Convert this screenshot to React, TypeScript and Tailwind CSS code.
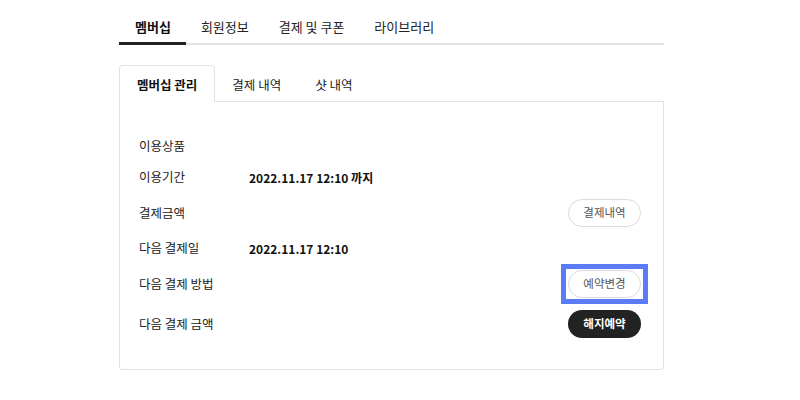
import React from "react";

const font = { fontFamily: '"Noto Sans CJK KR", "Noto Sans", sans-serif' };

function Pill({ children, dark, outline }: { children: React.ReactNode; dark?: boolean; outline?: boolean }) {
  const base = "relative w-[73px] h-[28px] rounded-full flex items-center justify-center text-[11.5px] leading-none";
  const look = dark
    ? "bg-[#222222] text-white font-bold"
    : "bg-white border border-[#dcdcdc] text-[#555555]";
  return (
    <div className={base + " " + look}>
      {children}
      {outline && (
        <span className="absolute left-[-8px] right-[-8px] top-[-7px] bottom-[-7px] border-[5px] border-[#5b7cf6] pointer-events-none" />
      )}
    </div>
  );
}

export default function App() {
  const topTabs = ["멤버십", "회원정보", "결제 및 쿠폰", "라이브러리"];
  const subTabs = ["멤버십 관리", "결제 내역", "샷 내역"];
  return (
    <div className="w-[800px] h-[400px] bg-white text-[#222222]" style={font}>
      <div className="ml-[119px] w-[545px] pt-[17px]">
        <div className="flex border-b-2 border-[#e4e4e4]">
          {topTabs.map((t, i) => (
            <div
              key={t}
              className={
                "relative pb-[6px] h-[26px] leading-[20px] text-[13px] " +
                (i === 0 ? "pl-[16px] pr-[15px] font-bold text-[#111111]" : "px-[15px] text-[#222222]")
              }
            >
              {t}
              {i === 0 && <span className="absolute left-0 right-0 bottom-[-2px] h-[3px] bg-[#222222]" />}
            </div>
          ))}
        </div>

        <div className="mt-[20px] flex">
          {subTabs.map((t, i) =>
            i === 0 ? (
              <div
                key={t}
                className="relative z-10 -mb-px h-[37px] pt-[9px] px-[17px] leading-[20px] text-[12.5px] border-t border-l border-r rounded-t-[4px] border-[#e2e2e2] bg-white font-bold text-[#111111]"
              >
                {t}
              </div>
            ) : (
              <div
                key={t}
                className="relative -mb-px h-[37px] pt-[9px] px-[17px] leading-[20px] text-[12.5px] border-t border-transparent text-[#222222]"
              >
                {t}
              </div>
            )
          )}
        </div>

        <div className="border border-[#e2e2e2] rounded-b-[3px] pt-[35px] pb-[31px] pl-[19px] pr-[22px]">
          <div className="flex flex-col gap-[12px] text-[12.5px]">
            <div className="h-[19px] flex items-center">
              <div className="w-[110px]">이용상품</div>
            </div>
            <div className="h-[19px] flex items-center">
              <div className="w-[110px]">이용기간</div>
              <div className="font-bold text-[#111111] text-[12px]">2022.11.17 12:10 까지</div>
            </div>
            <div className="h-[28px] flex items-center justify-between">
              <div className="w-[110px]">결제금액</div>
              <Pill>결제내역</Pill>
            </div>
            <div className="h-[19px] flex items-center">
              <div className="w-[110px]">다음 결제일</div>
              <div className="font-bold text-[#111111] text-[12px]">2022.11.17 12:10</div>
            </div>
            <div className="h-[28px] flex items-center justify-between">
              <div className="w-[110px]">다음 결제 방법</div>
              <Pill outline>예약변경</Pill>
            </div>
            <div className="h-[28px] flex items-center justify-between">
              <div className="w-[110px]">다음 결제 금액</div>
              <Pill dark>해지예약</Pill>
            </div>
          </div>
        </div>
      </div>
    </div>
  );
}
